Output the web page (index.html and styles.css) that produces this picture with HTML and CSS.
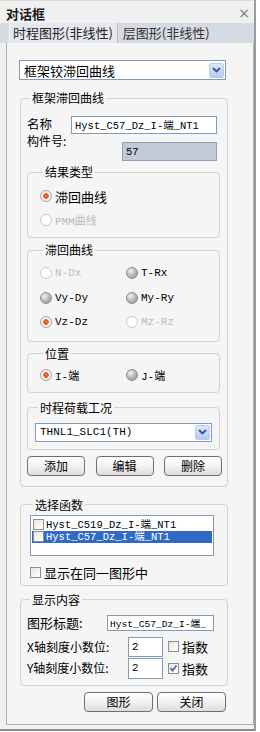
FILE: index.html
```html
<!DOCTYPE html>
<html lang="zh-CN">
<head>
  <meta charset="UTF-8" />
  <title>对话框</title>
  <link rel="stylesheet" href="styles.css">
</head>
<body>
  <div class="window">
    <div class="titlebar">
      <span class="title">对话框</span>
      <span class="close">×</span>
    </div>
    <div class="tabs">
      <div class="tab active">时程图形(非线性)</div>
      <div class="tab">层图形(非线性)</div>
    </div>

    <div class="panel">
      <div class="combo wide">
        <span class="combo-text cjk">框架铰滞回曲线</span>
        <span class="combo-btn"><svg width="9" height="6" viewBox="0 0 9 6"><path d="M1 1 L4.5 4.5 L8 1" fill="none" stroke="#3e5580" stroke-width="1.8"/></svg></span>
      </div>

      <fieldset class="group outer">
        <legend>框架滞回曲线</legend>
        <div class="row name-row">
          <span class="label">名称</span>
          <span class="input name-input">Hyst_C57_Dz_I-端_NT1</span>
        </div>
        <div class="row id-row">
          <span class="label id-label">构件号:</span>
          <span class="input id-input">57</span>
        </div>

        <fieldset class="group inner result">
          <legend>结果类型</legend>
          <div class="radio-row"><span class="radio checked"></span><span class="cjk">滞回曲线</span></div>
          <div class="radio-row disabled"><span class="radio off"></span><span>PMM曲线</span></div>
        </fieldset>

        <fieldset class="group inner curves">
          <legend>滞回曲线</legend>
          <div class="radio-grid">
            <div class="radio-row disabled"><span class="radio off"></span><span>N-Dx</span></div>
            <div class="radio-row"><span class="radio"></span><span>T-Rx</span></div>
            <div class="radio-row"><span class="radio"></span><span>Vy-Dy</span></div>
            <div class="radio-row"><span class="radio"></span><span>My-Ry</span></div>
            <div class="radio-row"><span class="radio checked"></span><span>Vz-Dz</span></div>
            <div class="radio-row disabled"><span class="radio off"></span><span>Mz-Rz</span></div>
          </div>
        </fieldset>

        <fieldset class="group inner position">
          <legend>位置</legend>
          <div class="radio-grid">
            <div class="radio-row"><span class="radio checked"></span><span>I-端</span></div>
            <div class="radio-row"><span class="radio"></span><span>J-端</span></div>
          </div>
        </fieldset>

        <fieldset class="group inner loadcase">
          <legend>时程荷载工况</legend>
          <div class="combo small">
            <span class="combo-text">THNL1_SLC1(TH)</span>
            <span class="combo-btn"><svg width="9" height="6" viewBox="0 0 9 6"><path d="M1 1 L4.5 4.5 L8 1" fill="none" stroke="#3e5580" stroke-width="1.8"/></svg></span>
          </div>
        </fieldset>

        <div class="btn-row">
          <button class="btn">添加</button>
          <button class="btn">编辑</button>
          <button class="btn">删除</button>
        </div>
      </fieldset>

      <fieldset class="group outer select-fn">
        <legend>选择函数</legend>
        <div class="listbox">
          <div class="item"><span class="check"></span><span>Hyst_C519_Dz_I-端_NT1</span></div>
          <div class="item selected"><span class="check"></span><span>Hyst_C57_Dz_I-端_NT1</span></div>
        </div>
        <div class="check-row same"><span class="check"></span><span class="cjk">显示在同一图形中</span></div>
      </fieldset>

      <fieldset class="group outer display">
        <legend>显示内容</legend>
        <div class="row title-row">
          <span class="label">图形标题:</span>
          <span class="input title-input">Hyst_C57_Dz_I-端_</span>
        </div>
        <div class="row axis-row x-row">
          <span class="label">X轴刻度小数位:</span>
          <span class="input num-input">2</span>
          <span class="check"></span><span class="cjk">指数</span>
        </div>
        <div class="row axis-row y-row">
          <span class="label">Y轴刻度小数位:</span>
          <span class="input num-input">2</span>
          <span class="check on"><svg width="9" height="9" viewBox="0 0 9 9"><path d="M1.5 4 L3.5 6.5 L7.5 1.5" fill="none" stroke="#5667a9" stroke-width="1.8"/></svg></span><span class="cjk">指数</span>
        </div>
      </fieldset>

      <div class="footer">
        <button class="btn big">图形</button>
        <button class="btn big">关闭</button>
      </div>
    </div>
  </div>
</body>
</html>
```

FILE: styles.css
```css
* {
  box-sizing: border-box;
}

body {
  margin: 0;
  background: #ffffff;
  font-family: "Liberation Mono", "Noto Sans CJK SC", monospace;
  font-size: 11px;
  color: #000000;
}

.cjk,
.label,
legend,
.btn {
  font-family: "Noto Sans CJK SC", sans-serif;
  font-size: 12px;
}

.window {
  width: 256px;
  height: 731px;
  background: #f0f0f0;
  border-right: 2px solid #9c9c9c;
  border-bottom: 2px solid #8c8c8c;
  display: flex;
  flex-direction: column;
}

/* title bar */
.titlebar {
  height: 23px;
  display: flex;
  justify-content: space-between;
  align-items: center;
  padding: 2px 4px 0 6px;
  border-top: 1px solid #dcdcdc;
}

.title {
  font-family: "Noto Sans CJK SC", sans-serif;
  font-weight: bold;
  font-size: 13px;
  color: #1a1a1a;
}

.close {
  font-family: "DejaVu Sans", sans-serif;
  font-size: 14px;
  color: #7a7a7a;
}

/* tabs */
.tabs {
  height: 20px;
  background: #d6dae2;
  display: flex;
  padding-left: 9px;
}

.tab {
  font-family: "Noto Sans CJK SC", sans-serif;
  font-size: 13px;
  line-height: 20px;
  color: #333333;
  padding: 0 4px 0 3px;
}

.tab.active {
  background: #e4e7ec;
  border-left: 1px solid #f4f5f7;
  border-right: 1px solid #b9bec8;
  color: #222222;
}

.tab + .tab {
  margin-left: 2px;
}

/* main panel */
.panel {
  flex: 1;
  margin: 0 0 4px 6px;
  background: #f5f5f5;
  border: 1px solid #aab0ba;
  border-top: none;
  padding: 17px 0 0 12px;
  display: flex;
  flex-direction: column;
}

/* combo boxes */
.combo {
  height: 20px;
  background: #ffffff;
  border: 1px solid #7f9db9;
  display: flex;
  align-items: center;
  justify-content: space-between;
  padding: 0 1px 0 4px;
}

.combo.wide {
  width: 207px;
}

.combo.small {
  width: 177px;
  height: 19px;
}

.combo-text {
  white-space: nowrap;
}

.combo-text.cjk {
  font-size: 13px;
}

.combo-btn {
  width: 15px;
  height: 15px;
  border-radius: 2px;
  background: linear-gradient(#dce8fb, #b4cbf2);
  border: 1px solid #bccdeb;
  display: flex;
  align-items: center;
  justify-content: center;
}

/* group boxes */
.group {
  margin: 0;
  border: 1px solid #d2d2d2;
  border-radius: 4px;
  min-width: 0;
}

.group legend {
  padding: 0 2px;
  line-height: 14px;
  margin-left: 3px;
}

.outer {
  width: 208px;
  margin-left: 1px;
}

.outer:first-of-type {
  margin-top: 11px;
  padding: 10px 0 10px 6px;
}

.inner {
  width: 193px;
}

/* label + input rows */
.row {
  display: flex;
  align-items: center;
}

.label {
  line-height: 14px;
}

.input {
  background: #ffffff;
  border: 1px solid #7f9db9;
  display: flex;
  align-items: center;
  padding-left: 3px;
  white-space: nowrap;
  overflow: hidden;
  font-size: 10.5px;
}

.name-row {
  height: 19px;
}

.name-row .label {
  width: 44px;
  font-size: 12.5px;
  line-height: 13px;
  margin-bottom: 3px;
}

.name-input {
  width: 146px;
  height: 18px;
}

.id-row {
  margin-top: 8px;
  align-items: flex-start;
}

.id-label {
  width: 95px;
  margin-top: -7px;
  line-height: 12px;
}

.id-input {
  width: 95px;
  height: 19px;
  background: #c3cad6;
  border-color: #8aa0bd;
}

/* radio buttons */
.radio-row {
  height: 24px;
  display: flex;
  align-items: center;
  gap: 3px;
  font-size: 11px;
}

.radio-row .cjk {
  font-size: 13px;
}

.radio-row.disabled {
  color: #bcbcbc;
}

.radio {
  width: 12px;
  height: 12px;
  border-radius: 50%;
  background: radial-gradient(circle at 35% 30%, #f4f4f4 0, #bdbdbd 45%, #8a8a8a 100%);
  border: 1px solid #8f8f8f;
}

.radio.checked {
  background: radial-gradient(circle, #f36a2e 0, #e0592a 2.5px, #ffffff 3.2px, #e8e8e8 5px, #c0c0c0 6px);
  border-color: #a7a7a7;
}

.radio.off {
  background: #ffffff;
  border-color: #cacaca;
}

.radio-grid {
  display: grid;
  grid-template-columns: 86px 86px;
}

.result {
  margin-top: 4px;
  padding: 5px 0 5px 12px;
}

.curves {
  margin-top: 5px;
  padding: 4px 0 6px 12px;
}

.curves .radio-row {
  height: 24.5px;
}

.position {
  margin-top: 5px;
  padding: 2px 0 5px 12px;
}

.loadcase {
  margin-top: 8px;
  padding: 8px 0 7px 7px;
}

/* buttons */
.btn-row {
  margin-top: 6px;
  width: 195px;
  display: flex;
  justify-content: space-between;
}

.btn {
  width: 58px;
  height: 20px;
  padding: 0;
  border: 1px solid #707070;
  border-radius: 4px;
  background: linear-gradient(#ffffff, #f2f2f2 50%, #dcdcdc);
  color: #000000;
  line-height: 16px;
}

.btn.big {
  width: 69px;
}

/* function list */
.select-fn {
  margin-top: 11px;
  padding: 3px 0 5px 9px;
}

.listbox {
  width: 184px;
  height: 41px;
  background: #ffffff;
  border: 1px solid #7f9db9;
  padding: 3px 1px 0 1px;
}

.item {
  height: 12px;
  display: flex;
  align-items: center;
  gap: 2px;
  font-size: 10.5px;
  line-height: 12px;
  white-space: nowrap;
}

.item.selected {
  background: #316ac5;
  color: #ffffff;
}

.check {
  width: 11px;
  height: 11px;
  flex: none;
  background: linear-gradient(135deg, #e6e6e6, #ffffff);
  border: 1px solid #8e8f8f;
  display: flex;
  align-items: center;
  justify-content: center;
}

.item .check {
  width: 11px;
  height: 11px;
  margin-left: 1px;
}

.check-row {
  display: flex;
  align-items: center;
  gap: 3px;
}

.same {
  margin-top: 10px;
  height: 14px;
}

.same .cjk {
  font-size: 13px;
}

/* display options */
.display {
  margin-top: 7px;
  padding: 8px 0 6px 6px;
}

.title-row .label {
  width: 80px;
  font-size: 13px;
}

.title-input {
  width: 107px;
  height: 16px;
  font-size: 9.6px;
  padding-left: 2px;
}

.axis-row .label {
  width: 101px;
  font-size: 12px;
}

.num-input {
  width: 35px;
  margin-right: 5px;
  font-size: 11px;
}

.axis-row .cjk {
  font-size: 13px;
  margin-left: 3px;
}

.x-row {
  margin-top: 6px;
  height: 20px;
}

.x-row .num-input {
  height: 20px;
}

.y-row {
  margin-top: 1px;
  height: 21px;
}

.y-row .num-input {
  height: 21px;
}

.footer {
  margin-top: 6px;
  width: 207px;
  display: flex;
  justify-content: flex-end;
  gap: 4px;
}
```
